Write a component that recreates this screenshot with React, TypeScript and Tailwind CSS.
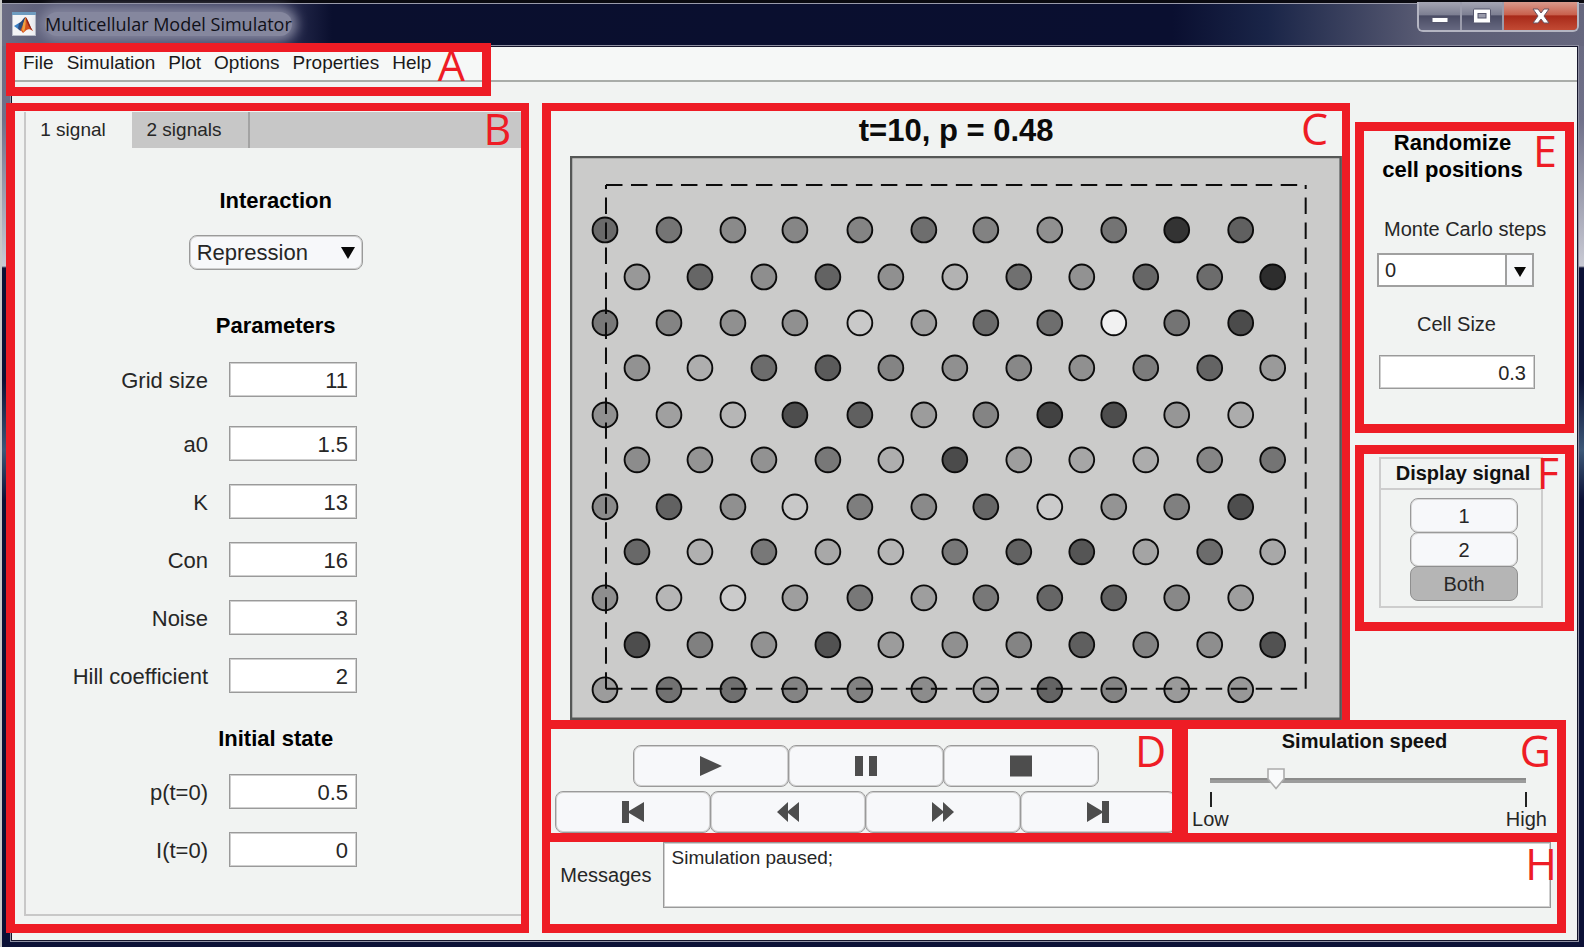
import React, { useState } from "react";

const ODD_X = [35, 99, 163, 225, 290, 354, 416, 480, 544, 607, 671];
const EVEN_X = [67, 130, 194, 258, 321, 385, 449, 512, 576, 640, 703];
const ROW_Y = [74, 121, 167, 212, 259, 304, 351, 396, 442, 489, 534];

// Expression level of every cell, one hex byte per cell (00 black, ff white).
const SHADES = [
  "6a 75 8a 86 84 6e 82 90 74 33 60",
  "98 66 8e 63 90 b2 70 92 66 6c 2d",
  "78 84 90 90 c9 9e 6a 6e f1 74 4b",
  "92 ae 6c 5b 84 90 88 90 7c 64 9a",
  "90 a0 b6 4d 60 9c 84 42 4d 96 ac",
  "8c 94 92 78 ae 4b 9e a6 ac 86 74",
  "8a 62 90 c8 7e 8a 66 cb 94 80 4e",
  "68 b0 78 a8 b6 78 62 55 a4 6c a8",
  "8e b6 cb 9e 78 9e 78 66 62 88 9e",
  "4d 80 92 52 9c 90 84 5f 82 8e 52",
  "9c 72 70 84 82 8c a6 64 84 9a 98",
].map((row) => row.split(" "));

const RED = "border-[#ee1c25]";
const EDGE = "border border-[#9a9a9a] shadow-[inset_0_0_0_1px_#cfcfcf]";
const FIELD = `${EDGE} bg-white px-2 pt-[3px] text-right text-[#262626] outline-none`;

function Mark({ children, className }: { children: string; className: string }) {
  return (
    <span
      aria-hidden="true"
      className={`pointer-events-none absolute z-10 font-['Open_Sans',sans-serif] text-[43px] leading-[43px] text-[#ee1c25] ${className}`}
    >
      {children}
    </span>
  );
}

function MatlabIcon() {
  return (
    <svg viewBox="0 0 24 24" className="size-6 shrink-0" aria-hidden="true">
      <rect x="0.5" y="0.5" width="23" height="23" fill="#f4f4f6" stroke="#b9bcc8" />
      <rect x="0" y="0" width="24" height="3" fill="#6f9cc0" />
      <path d="M2 14 L7 11 L9 13 L6 17 Z" fill="#3a7fc4" />
      <path d="M7 11 C10 10 11 6 13.500 5 L10.500 16 L8.500 19 L6 17 Z" fill="#2b4a7a" />
      <path d="M13.500 5 C16 7 18 15 21 19 C18 17 16.500 16.500 14.500 18 L11 21 L8.500 18 L11 13 Z" fill="#d4511e" />
      <path d="M13.500 5 C13.800 9 14 14 12 20 L10 18 L11 12 Z" fill="#f0a040" />
      <path d="M13.500 5 C16 7 18 15 21 19 C17 16 15 11 13.500 5 Z" fill="#8e1f1a" />
    </svg>
  );
}

function TitleBar() {
  return (
    <header className="-ml-[9px] -mr-[6px] flex h-[46px] items-start border-t-[3px] border-[#0a0a10] bg-[linear-gradient(90deg,#6d6e85_0px,#5d5f7a_40px,#32365a_270px,#0a0f2e_330px,#0a0f30_74%,#1a2548_80%,#5a5c74_90%,#66677e_100%)] shadow-[inset_0_1px_0_#9a9bab]">
      <div className="flex items-center gap-[9px] pl-2.5 pt-[9px]">
        <MatlabIcon />
        <h1 className="whitespace-nowrap rounded-full bg-[#85879e] text-[18px] leading-6 text-[#101018] shadow-[0_0_12px_5px_#85879e] font-['Open_Sans',sans-serif]">
          Multicellular Model Simulator
        </h1>
      </div>
      <div className="-mt-px ml-auto mr-[5px] flex h-[30px] overflow-hidden rounded-b-md border-2 border-t-0 border-[#b4b5c2]">
        <button aria-label="Minimize" className="flex w-[43px] items-center justify-center border-r-2 border-[#9a9bab] bg-[linear-gradient(#a5a6b4_0%,#7d7f92_45%,#4a4c64_50%,#666880_100%)]">
          <svg viewBox="0 0 18 16" className="h-4 w-[18px]"><rect x="1" y="9.500" width="16" height="5" fill="#fff" stroke="#55566c" /></svg>
        </button>
        <button aria-label="Maximize" className="flex w-[42px] items-center justify-center border-r-2 border-[#9a9bab] bg-[linear-gradient(#a5a6b4_0%,#7d7f92_45%,#4a4c64_50%,#666880_100%)]">
          <svg viewBox="0 0 18 16" className="h-4 w-[18px]">
            <rect x="0.5" y="1" width="17" height="14" rx="1" fill="#fff" stroke="#55566c" />
            <rect x="5" y="5.500" width="8" height="4.500" fill="#9a9bab" stroke="#55566c" />
          </svg>
        </button>
        <button aria-label="Close" className="flex w-[73px] items-center justify-center bg-[linear-gradient(#d99a8c_0%,#c9614e_45%,#a82a1a_50%,#c24a34_100%)]">
          <svg viewBox="0 0 18 16" className="h-4 w-[18px]">
            <path d="M1 1h5l3 4 3-4h5l-5 7 5 7h-5l-3-4-3 4H1l5-7z" fill="#fff" stroke="#6b5560" />
          </svg>
        </button>
      </div>
    </header>
  );
}

function MenuBar() {
  return (
    <nav className="relative flex h-[35px] gap-[13px] border-b-2 border-[#a9aca9] bg-[#f6f8f7] pl-[11px] text-[19px] leading-[31px]">
      {["File", "Simulation", "Plot", "Options", "Properties", "Help"].map((m) => (
        <button key={m} className="h-[31px] text-[#1a1a1a]">{m}</button>
      ))}
      <div className={`pointer-events-none absolute -left-1.5 -top-1 z-10 h-[53px] w-[485px] border-[9px] ${RED}`}>
        <Mark className="right-[17px] -top-[9px]">A</Mark>
      </div>
    </nav>
  );
}

function Row({ id, label, value }: { id: string; label: string; value: string }) {
  const [v, setV] = useState(value);
  return (
    <div className="flex h-[35px] items-center gap-[21px]">
      <label htmlFor={id} className="w-[178px] pt-0.5 text-right">{label}</label>
      <input id={id} value={v} onChange={(e) => setV(e.target.value)} className={`h-full w-[128px] ${FIELD}`} />
    </div>
  );
}

function SignalPanel() {
  return (
    <section className={`relative -ml-1.5 flex flex-col border-8 border-b-[9px] border-l-[9px] pb-2 pl-[9px] ${RED}`}>
      <Mark className="right-2.5 -top-1">B</Mark>
      <div className="mt-px flex h-9 border-l-2 border-[#c8c8c8] bg-[#c7c7c7] text-[19px]" role="tablist">
        <button role="tab" aria-selected="true" className="w-[106px] bg-[#f1f3f2] pr-3 text-[#262626]">1 signal</button>
        <button role="tab" aria-selected="false" className="w-[118px] border-r-2 border-[#a3a3a3] pr-3 text-[#262626]">2 signals</button>
      </div>
      <form className="flex flex-1 flex-col border-b-2 border-l-2 border-[#c8c8c8] pl-1 text-[22px] leading-7 text-[#262626]">
        <h2 className="mt-[39px] text-center font-bold text-black">Interaction</h2>
        <div className="relative mx-auto mt-5 h-[35px] w-[174px]">
          <select aria-label="Interaction" className={`h-full w-full appearance-none rounded-lg bg-[#f7f8fa] pl-[7px] outline-none ${EDGE}`}>
            <option>Repression</option>
            <option>Activation</option>
          </select>
          <svg viewBox="0 0 14 12" className="pointer-events-none absolute right-2 top-3 h-3 w-3.5"><path d="M0 0h14L7 12z" fill="#080808" /></svg>
        </div>
        <h2 className="mt-[42px] text-center font-bold text-black">Parameters</h2>
        <div className="mt-[22px] flex flex-col gap-[23px]">
          <div className="pb-1.5"><Row id="grid" label="Grid size" value="11" /></div>
          <Row id="a0" label="a0" value="1.5" />
          <Row id="k" label="K" value="13" />
          <Row id="con" label="Con" value="16" />
          <Row id="noise" label="Noise" value="3" />
          <Row id="hill" label="Hill coefficient" value="2" />
        </div>
        <h2 className="mt-8 text-center font-bold text-black">Initial state</h2>
        <div className="mt-[21px] flex flex-col gap-[23px]">
          <Row id="p0" label="p(t=0)" value="0.5" />
          <Row id="i0" label="I(t=0)" value="0" />
        </div>
      </form>
    </section>
  );
}

function CellPlot() {
  return (
    <section className={`relative flex-1 border-8 border-b-[9px] border-l-[9px] pl-[19px] ${RED}`}>
      <Mark className="right-3.5 -top-1">C</Mark>
      <h2 className="h-[45px] text-center text-[31px] font-bold leading-[40px] text-[#0b0b0b]">t=10, p = 0.48</h2>
      <svg viewBox="0 0 772 564" className="block h-auto w-full" role="img" aria-label="Cell lattice">
        <rect x="1" y="1" width="770" height="562" fill="#cbcbca" stroke="#555756" strokeWidth="2.500" />
        {SHADES.map((row, r) =>
          row.map((s, c) => (
            <circle
              key={`${r}-${c}`}
              cx={(r % 2 ? EVEN_X : ODD_X)[c]}
              cy={ROW_Y[r]}
              r="12.400"
              fill={`#${s}${s}${s}`}
              stroke="#0c0c0c"
              strokeWidth="1.900"
            />
          ))
        )}
        <g fill="none" stroke="#0c0c0c" strokeWidth="2" strokeDasharray="16.500 8.500">
          <path d="M36 533V29" />
          <path d="M36 29H736" />
          <path d="M736 533V29" />
          <path d="M36 533H736" />
        </g>
      </svg>
    </section>
  );
}

function RandomizePanel() {
  const [steps, setSteps] = useState("0");
  const [size, setSize] = useState("0.3");
  return (
    <section className={`relative h-[311px] border-[9px] px-[13px] text-[20px] text-[#262626] ${RED}`}>
      <Mark className="right-2 -top-0.5">E</Mark>
      <h2 className="-mt-0.5 pr-6 text-center text-[22px] font-bold leading-[27px] text-black">Randomize<br />cell positions</h2>
      <label htmlFor="mc" className="mt-[34px] block whitespace-nowrap pl-[7px] leading-6">Monte Carlo steps</label>
      <div className="mt-3 flex h-[34px] w-[157px] border-2 border-[#a0a0a0] bg-white">
        <input id="mc" value={steps} onChange={(e) => setSteps(e.target.value)} className="min-w-0 flex-1 px-1.5 outline-none" />
        <button aria-label="Show step choices" className="flex w-[27px] items-center justify-center border-l-2 border-[#a0a0a0] bg-[#f7f8fa]">
          <svg viewBox="0 0 12 10" className="mt-1 h-2.5 w-3"><path d="M0 0h12L6 10z" fill="#080808" /></svg>
        </button>
      </div>
      <label htmlFor="size" className="mt-[25px] block pr-4 text-center leading-6">Cell Size</label>
      <input id="size" value={size} onChange={(e) => setSize(e.target.value)} className={`ml-0.5 mt-[19px] h-[34px] w-[156px] ${FIELD}`} />
    </section>
  );
}

function DisplayPanel() {
  const [on, setOn] = useState("Both");
  return (
    <section className={`relative h-[186px] border-[9px] pl-[15px] pt-[3px] text-[20px] text-[#262626] ${RED}`}>
      <Mark className="right-1.5 -top-[3px]">F</Mark>
      <div className="h-[151px] w-[164px] border-2 border-[#cdcdcd]">
        <h2 className="h-[31px] border-b-2 border-[#cdcdcd] pl-1 text-center font-bold leading-[29px] text-[#111]">Display signal</h2>
        <div className="ml-[29px] mt-[9px] flex w-[108px] flex-col">
          {["1", "2", "Both"].map((s) => (
            <button
              key={s}
              onClick={() => setOn(s)}
              className={`-mt-px h-[35px] rounded-lg border ${on === s ? "border-[#8f8f8f] bg-[#b5b5b5]" : "border-[#9a9a9a] bg-[#f7f8fa] shadow-[inset_0_0_0_1px_#d8d8d8]"}`}
            >
              {s}
            </button>
          ))}
        </div>
      </div>
    </section>
  );
}

function PlayerButton({ label, d }: { label: string; d: string }) {
  return (
    <button aria-label={label} className={`-mr-px flex h-[42px] w-[156px] shrink-0 items-center justify-center rounded-lg bg-[#f7f8fa] ${EDGE}`}>
      <svg viewBox="0 0 22 22" className="size-[22px]" fill="#4d4d4d"><path d={d} /></svg>
    </button>
  );
}

function PlayerPanel() {
  return (
    <section className={`relative overflow-hidden border-8 border-b-[9px] border-l-[9px] border-t-[9px] pt-4 ${RED}`}>
      <Mark className="right-1.5 top-0">D</Mark>
      <div className="flex pl-[82px]">
        <PlayerButton label="Play" d="M0 1L22 11L0 21z" />
        <PlayerButton label="Pause" d="M0 1h8v20H0zM14 1h8v20h-8z" />
        <PlayerButton label="Stop" d="M0 0.500h22v21H0z" />
      </div>
      <div className="mt-1 flex pl-1">
        <PlayerButton label="First" d="M0 0h7v10L22 1v20L7 12v10H0z" />
        <PlayerButton label="Rewind" d="M0 11L11 1v9L22 1v20L11 12v9z" />
        <PlayerButton label="Forward" d="M22 11L11 1v9L0 1v20L11 12v9z" />
        <PlayerButton label="Last" d="M22 0h-7v10L0 1v20l15-9v10h7z" />
      </div>
    </section>
  );
}

function SpeedPanel() {
  const [speed, setSpeed] = useState(21);
  return (
    <section className={`relative border-[9px] border-l-8 px-2 text-[20px] text-[#262626] ${RED}`}>
      <Mark className="right-1.5 top-0">G</Mark>
      <h2 className="pr-4 text-center font-bold leading-6 text-[#111]"><label htmlFor="speed">Simulation speed</label></h2>
      <div className="relative ml-3.5 mr-[23px] mt-[15px] h-[22px]">
        <div className="pt-2.5"><div className="h-[5px] border-t-2 border-[#8b8b8b] bg-[#9c9c9c]" /></div>
        <svg viewBox="0 0 18 22" className="absolute top-0 h-[22px] w-[18px] -translate-x-1/2" style={{ left: `${speed}%` }}>
          <path d="M1 1h16v10l-8 9.500l-8-9.500z" fill="#f9fafb" stroke="#acacac" strokeWidth="1.600" />
        </svg>
        <input id="speed" type="range" value={speed} onChange={(e) => setSpeed(Number(e.target.value))} className="absolute inset-0 h-full w-full opacity-0" />
      </div>
      <div className="ml-3.5 mr-[22px] mt-0.5 h-[15px] border-x-2 border-[#222]" />
      <div className="-mx-1 flex justify-between pr-1.5 leading-6"><span>Low</span><span>High</span></div>
    </section>
  );
}

function MessagePanel() {
  return (
    <section className={`relative -mt-[9px] mr-2 flex h-[100px] items-start gap-3 border-[9px] border-l-8 pl-2.5 pr-1.5 text-[20px] text-[#262626] ${RED}`}>
      <Mark className="right-0 top-0">H</Mark>
      <label htmlFor="msg" className="mt-[21px] leading-6">Messages</label>
      <textarea id="msg" readOnly value="Simulation paused;" className={`h-[66px] flex-1 resize-none bg-white px-[7px] py-[3px] text-[19px] leading-6 outline-none ${EDGE}`} />
    </section>
  );
}

export default function App() {
  return (
    <div className="flex min-h-screen flex-col border-l-2 border-[#c9c9c9] bg-[linear-gradient(180deg,#66677e_0px,#70718a_120px,#c9cad4_266px,#0c1136_268px,#0c1136_380px,#3c5878_450px,#0c1136_500px,#0c1136_100%)] pb-1.5 pl-[9px] pr-1.5 font-['Liberation_Sans',Arial,sans-serif]">
      <TitleBar />
      <div className="flex flex-1 flex-col border border-[#15152b] bg-[#f1f3f2] shadow-[0_0_0_1px_#8f90a2]">
        <MenuBar />
        <main className="grid flex-1 grid-cols-[517fr_1031fr] gap-[13px] pb-[7px] pr-[3px] pt-[21px]">
          <SignalPanel />
          <div className="flex min-w-0 flex-col">
            <div className="flex gap-[5px]">
              <CellPlot />
              <div className="mt-[19px] flex w-[219px] flex-col gap-3">
                <RandomizePanel />
                <DisplayPanel />
              </div>
            </div>
            <div className="-mt-[9px] mr-2 grid h-[122px] grid-cols-[638fr_386fr]">
              <PlayerPanel />
              <SpeedPanel />
            </div>
            <MessagePanel />
          </div>
        </main>
      </div>
    </div>
  );
}
